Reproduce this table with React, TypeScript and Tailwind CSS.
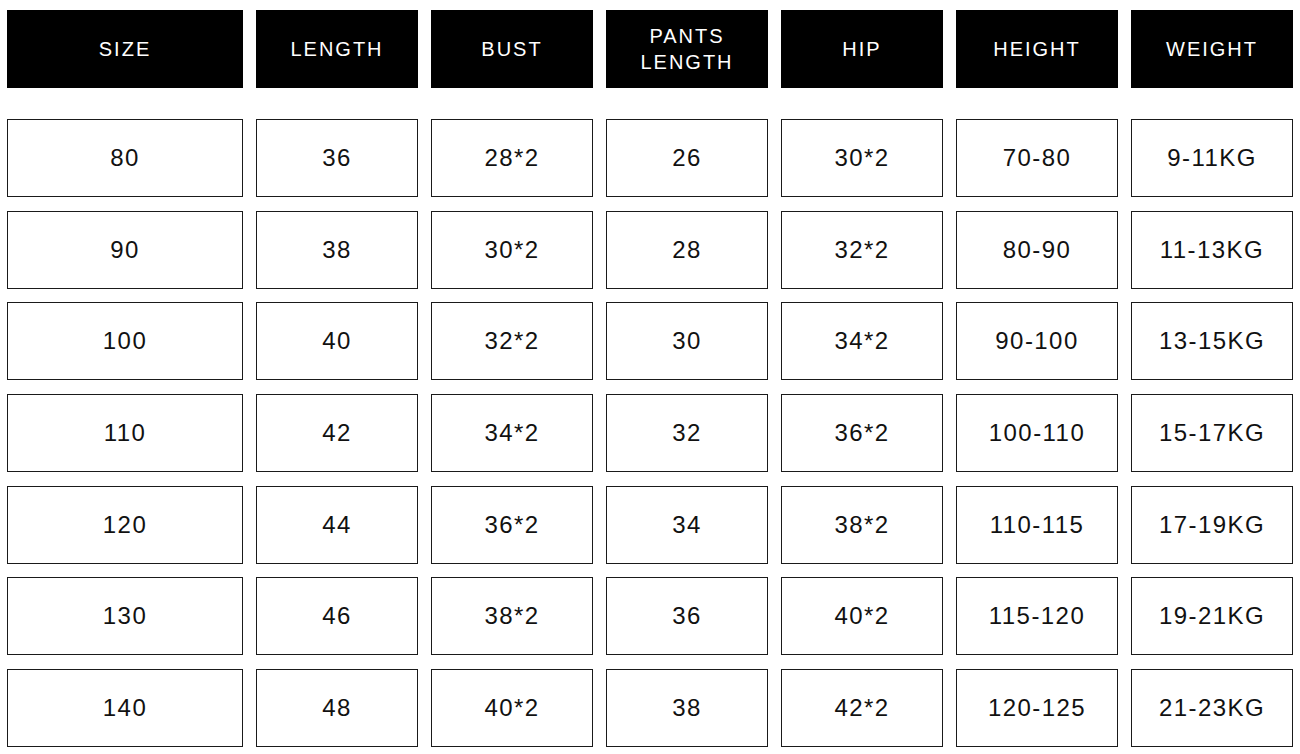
const headers = ["SIZE", "LENGTH", "BUST", "PANTS\nLENGTH", "HIP", "HEIGHT", "WEIGHT"];

const rows = [
  ["80", "36", "28*2", "26", "30*2", "70-80", "9-11KG"],
  ["90", "38", "30*2", "28", "32*2", "80-90", "11-13KG"],
  ["100", "40", "32*2", "30", "34*2", "90-100", "13-15KG"],
  ["110", "42", "34*2", "32", "36*2", "100-110", "15-17KG"],
  ["120", "44", "36*2", "34", "38*2", "110-115", "17-19KG"],
  ["130", "46", "38*2", "36", "40*2", "115-120", "19-21KG"],
  ["140", "48", "40*2", "38", "42*2", "120-125", "21-23KG"],
];

export default function App() {
  return (
    <div className="h-[754px] w-[1300px] bg-white px-[7px] pt-[10px] font-['Liberation_Sans',Arial,sans-serif]">
      <div className="grid grid-cols-[236px_repeat(6,162px)] gap-x-[13px]">
        {headers.map((h) => (
          <div
            key={h}
            className="flex h-[78px] items-center justify-center whitespace-pre-line bg-black text-center text-[20px] leading-[26px] tracking-[0.1em] text-white"
          >
            {h}
          </div>
        ))}
      </div>
      <div className="mt-[31px] flex flex-col gap-y-[13.7px]">
        {rows.map((r, i) => (
          <div key={i} className="grid grid-cols-[236px_repeat(6,162px)] gap-x-[13px]">
            {r.map((c, j) => (
              <div
                key={j}
                className="flex h-[78px] items-center justify-center border border-[#1a1a1a] text-[24px] tracking-[0.06em] text-[#111]"
              >
                {c}
              </div>
            ))}
          </div>
        ))}
      </div>
    </div>
  );
}
